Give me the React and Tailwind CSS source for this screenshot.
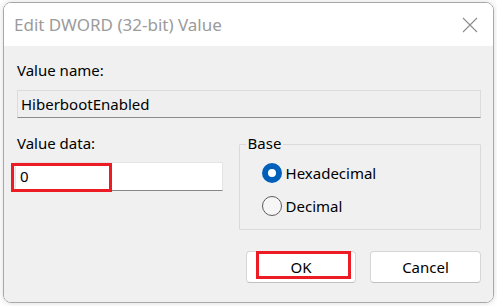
import React from 'react';

const font = { fontFamily: '"Segoe UI", "Noto Sans", "Liberation Sans", sans-serif' };

// Radio button, Windows 11 style
const Radio = ({ checked, label }) => (
  <div className="flex items-center gap-[4px] h-[20px]">
    {checked ? (
      <span className="w-[20px] h-[20px] rounded-full bg-[#005fb8] flex items-center justify-center">
        <span className="w-[8px] h-[8px] rounded-full bg-white" />
      </span>
    ) : (
      <span className="w-[20px] h-[20px] rounded-full border border-[#5c5c5c] bg-[#f6f6f6]" />
    )}
    <span className="text-[15px] text-black leading-none">{label}</span>
  </div>
);

export default function App() {
  return (
    <div className="w-[497px] h-[306px] bg-white overflow-hidden pt-[2px] pl-[3px]" style={font}>
      <div className="w-[491px] h-[301px] rounded-[8px] border border-[#a8a8a8] overflow-hidden flex flex-col shadow-[0_0_6px_rgba(0,0,0,0.15)]">
        {/* title bar */}
        <div className="h-[43px] bg-white flex items-center justify-between pl-[10px] pr-[15px] shrink-0">
          <span className="text-[17px] text-[#9b9b9b]">Edit DWORD (32-bit) Value</span>
          <svg width="16" height="16" viewBox="0 0 16 16">
            <path d="M1 1 L15 15 M15 1 L1 15" stroke="#8c8c8c" strokeWidth="1.1" />
          </svg>
        </div>

        {/* body */}
        <div className="flex-1 bg-[#f0f0f0] pl-[12px] pr-[12px] pt-[14px]">
          <div className="text-[15px] text-black leading-[20px] pl-[1px]">Value name:</div>
          <div className="mt-[10px] ml-[1px] h-[28px] border border-[#dcdcdc] border-b-[#8a8a8a] bg-[#efefef] flex items-center pl-[3px] text-[15px] text-black">
            HiberbootEnabled
          </div>

          <div className="flex mt-[11px]">
            {/* left column */}
            <div className="w-[207px] pt-[4px]">
              <div className="text-[15px] text-black leading-[20px] pl-[1px]">Value data:</div>
              <div className="relative mt-[9px] ml-[-1px] h-[29px] bg-white border border-[#e4e4e4] border-b-[#868686] flex items-center pl-[4px] text-[15px] text-black">
                0
                <span className="absolute left-[-5px] top-[0px] w-[101px] h-[29px] border-[3px] border-[#ed1c24]" />
              </div>
            </div>

            {/* Base group */}
            <div className="ml-[16px] mt-[15px] relative w-[243px] h-[86px] border border-[#dadada] rounded-[1px]">
              <span className="absolute left-[6px] top-[-12px] bg-[#f0f0f0] px-[2px] text-[15px] text-black leading-[20px]">Base</span>
              <div className="flex flex-col gap-[13px] pl-[22px] pt-[18px]">
                <Radio checked label="Hexadecimal" />
                <Radio label="Decimal" />
              </div>
            </div>
          </div>

          {/* buttons */}
          <div className="flex justify-end gap-[14px] mt-[21px]">
            <button className="relative w-[110px] h-[32px] bg-white border border-[#d6d6d6] border-b-[#c0c0c0] rounded-[4px] text-[15px] text-black">
              OK
              <span className="absolute left-[9px] top-[-1px] w-[95px] h-[28px] border-[3px] border-[#ed1c24]" />
            </button>
            <button className="w-[111px] h-[32px] bg-white border border-[#d6d6d6] border-b-[#c0c0c0] rounded-[4px] text-[15px] text-black">
              Cancel
            </button>
          </div>
        </div>
      </div>
    </div>
  );
}
